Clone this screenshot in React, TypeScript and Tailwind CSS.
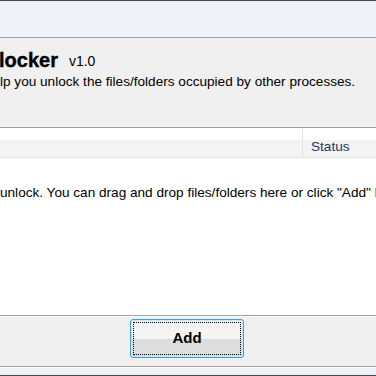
import React from "react";

export default function App() {
  const font = { fontFamily: '"Liberation Sans", Arial, sans-serif' };
  return (
    <div className="w-[376px] h-[376px] overflow-hidden flex flex-col bg-[#f0f0f0] text-black" style={font}>
      {/* top window strip */}
      <div className="h-[37px] shrink-0 border-t border-[#4a4a4a] bg-[#eef3fa]" />
      {/* header panel */}
      <div className="h-[91px] shrink-0 border-t border-[#a0a0a0] border-b border-b-[#a0a0a0] bg-[#f0f0f0] flex flex-col whitespace-nowrap">
        <div className="h-[32px] flex items-end gap-[11px]">
          <span className="text-[20px] leading-[20px] font-bold ml-[-1px] [-webkit-text-stroke:0.4px_black]">locker</span>
          <span className="text-[14px] leading-[14px] pb-[2px]">v1.0</span>
        </div>
        <div className="mt-[5px] text-[13.6px] leading-[14px]">lp you unlock the files/folders occupied by other processes.</div>
      </div>
      {/* list */}
      <div className="flex-1 flex flex-col bg-white border-b border-[#a0a0a0]">
        <div className="h-[30px] shrink-0 flex border-t border-white border-b border-b-[#e3e4e6] bg-gradient-to-b from-[#ffffff] from-40% to-[#f2f3f5] to-40%">
          <div className="w-[303px] border-r border-[#e3e4e6]" />
          <div className="flex-1 pl-[8px] pt-[11px] text-[13.6px] leading-[14px] text-[#1e395b]">Status</div>
        </div>
        <div className="pt-[28px] text-[13.6px] leading-[14px] whitespace-nowrap overflow-hidden">
          unlock. You can drag and drop files/folders here or click "Add" button.
        </div>
      </div>
      {/* bottom panel */}
      <div className="h-[51px] shrink-0 border-t border-white border-b border-b-[#a0a0a0] flex justify-start pl-[130px] pt-[2px]">
        <button
          className="w-[114px] h-[39px] rounded-[3px] border border-[#3c9fd8] p-[2px] bg-gradient-to-b from-[#f4f4f4] from-50% to-[#dddddd] to-50% shadow-[inset_0_0_0_1px_#c8e6f8]"
          style={font}
        >
          <div className="w-full h-full border border-dotted border-black flex items-center justify-center text-[15px] font-bold">
            Add
          </div>
        </button>
      </div>
      {/* bottom strip */}
      <div className="h-[9px] shrink-0 border-t border-white bg-[#eef3fa] border-b border-b-[#4a4a4a]" />
    </div>
  );
}
